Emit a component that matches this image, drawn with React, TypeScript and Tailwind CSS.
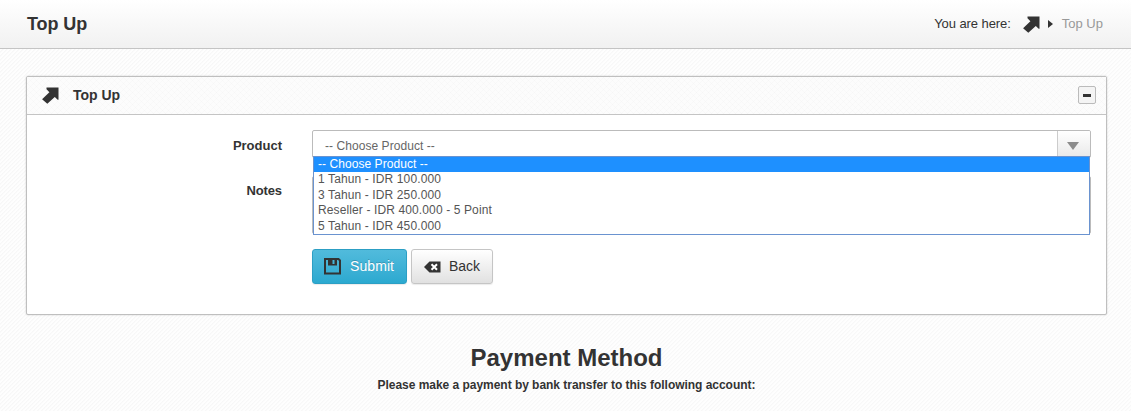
import React from "react";

const options = [
  "-- Choose Product --",
  "1 Tahun - IDR 100.000",
  "3 Tahun - IDR 250.000",
  "Reseller - IDR 400.000 - 5 Point",
  "5 Tahun - IDR 450.000",
];

function ArrowIcon() {
  return (
    <svg width="17" height="17" viewBox="0 0 17 17" className="shrink-0" fill="#333">
      <path d="M4.5 0.5H16.5V12.8H15.7L12.8 9.9L5.3 16.8L0.1 12.2L7.4 5.2L4.5 2.2Z" />
    </svg>
  );
}

function SaveIcon() {
  return (
    <svg width="17" height="17" viewBox="0 0 17 17" className="shrink-0">
      <path d="M1 1H14.5L16 2.5V15.5H1Z" fill="none" stroke="#333" strokeWidth="2" />
      <path fillRule="evenodd" d="M4 0H13V7.5H4ZM8.5 2V6H10.5V2Z" fill="#333" />
      <path d="M3.5 2V8M13.5 2V8" stroke="#4eb3d3" strokeWidth="1" />
    </svg>
  );
}

function BackIcon() {
  return (
    <svg width="17" height="12" viewBox="0 0 17 12" className="shrink-0">
      <path d="M5.5 0.5H16.5V11.5H5.5L0 6Z" fill="#333" />
      <path d="M7.5 3.2L13 8.8M13 3.2L7.5 8.8" stroke="#fff" strokeWidth="2" />
    </svg>
  );
}

export default function App() {
  return (
    <div className="h-[411px] w-full overflow-hidden bg-[#fcfcfc] bg-[repeating-linear-gradient(135deg,#f7f7f7_0px,#fefefe_1.414px,#fefefe_2.828px)] font-['Liberation_Sans',Arial,sans-serif] text-[#333]">
      <header className="flex h-[49px] items-center justify-between border-b border-[#c4c4c4] bg-linear-to-b from-white to-[#f1f1f1] pr-7 pl-[27px]">
        <h1 className="text-[18px] leading-6 font-bold tracking-[-0.1px]">Top Up</h1>
        <nav className="flex items-center text-[13px] leading-5">
          <span className="tracking-[-0.07px]">You are here:</span>
          <span className="ml-3 flex"><ArrowIcon /></span>
          <svg width="5" height="8" viewBox="0 0 5 8" className="ml-2 shrink-0"><path d="M0 0L5 4L0 8Z" fill="#333" /></svg>
          <span className="ml-[9px] text-[#999]">Top Up</span>
        </nav>
      </header>

      <section className="mt-[27px] mr-6 ml-6.5 h-[239px] rounded-[2px] border border-[#bfbfbf] bg-white shadow-[0_0_2px_rgba(0,0,0,0.2)]">
        <div className="flex h-[38px] items-center border-b border-[#c4c4c4] bg-[#fcfcfc] bg-[repeating-linear-gradient(45deg,#eeeeee70_0px,#ffffff00_1.414px,#ffffff00_4.243px),repeating-linear-gradient(135deg,#eeeeee70_0px,#ffffff00_1.414px,#ffffff00_4.243px)] pr-2.5 pl-[15px]">
          <ArrowIcon />
          <h2 className="mb-0.5 ml-3.5 text-[14px] leading-5 font-bold">Top Up</h2>
          <button aria-label="Collapse" className="mb-px ml-auto flex size-[18px] items-center justify-center rounded-[2px] border border-[#bbb] bg-[#f4f4f4]">
            <span className="mt-px h-[3px] w-2 bg-[#333]" />
          </button>
        </div>

        <div className="pt-[15px] pr-[15px]">
          <div className="flex h-[46px]">
            <label className="w-[255px] pt-1.5 text-right text-[13px] leading-5 font-bold">Product</label>
            <div className="relative ml-[30px] h-[28px] flex-1">
              <div className="flex h-full overflow-hidden rounded-[2px] border border-[#bbb] bg-white">
                <span className="flex-1 pt-[6px] pl-3 text-[12px] leading-[18px] tracking-[0.06px] text-[#666]">-- Choose Product --</span>
                <span className="flex w-[33px] justify-center border-l border-[#ccc] bg-linear-to-b from-white to-[#e9e9e9] pt-[11px] pr-0.5">
                  <svg width="12" height="8" viewBox="0 0 12 8"><path d="M0 0H12L6 8Z" fill="#8c8c8c" /></svg>
                </span>
              </div>
              <ul className="absolute top-[26px] right-px left-px z-10 h-[79px] border border-[#6a93d0] bg-white text-[12px] leading-[15px] tracking-[0.12px] text-[#555]">
                {options.map((option, i) => (
                  <li key={option} className={i === 0 ? "h-[15px] bg-[#1e90ff] pl-1 tracking-[0.06px] text-white" : "h-[15.5px] pl-1"}>
                    {option}
                  </li>
                ))}
              </ul>
            </div>
          </div>
          <div className="flex h-[73px]">
            <label className="w-[255px] pt-[5px] text-right text-[13px] leading-5 font-bold tracking-[-0.1px]">Notes</label>
            <textarea aria-label="Notes" className="ml-[30px] h-[58px] flex-1 resize-none rounded-[2px] border border-[#bbb] bg-white" />
          </div>
          <div className="ml-[285px] flex gap-1 text-[14px] leading-5">
            <button className="flex h-[35px] w-[95px] items-center gap-[9px] rounded-[3px] border border-[#2c9fc4] bg-linear-to-b from-[#51bbdc] to-[#2ba9d0] pl-[11px] text-white shadow-[0_1px_1px_rgba(0,0,0,0.08)] [text-shadow:0_-1px_0_rgba(0,0,0,0.2)]">
              <SaveIcon /><span className="mb-0.5 tracking-[0.08px]">Submit</span>
            </button>
            <button className="flex h-[35px] w-[82px] items-center gap-2 rounded-[3px] border border-[#c5c5c5] bg-linear-to-b from-white to-[#e1e1e1] pl-3 shadow-[0_1px_1px_rgba(0,0,0,0.08)]">
              <BackIcon /><span className="mb-0.5">Back</span>
            </button>
          </div>
        </div>
      </section>

      <section className="mt-[27px] pl-0.5 text-center font-bold">
        <h2 className="text-[24px] leading-8">Payment Method</h2>
        <p className="mt-[3px] text-[12px] leading-4 tracking-[-0.035px]">Please make a payment by bank transfer to this following account:</p>
      </section>
    </div>
  );
}
